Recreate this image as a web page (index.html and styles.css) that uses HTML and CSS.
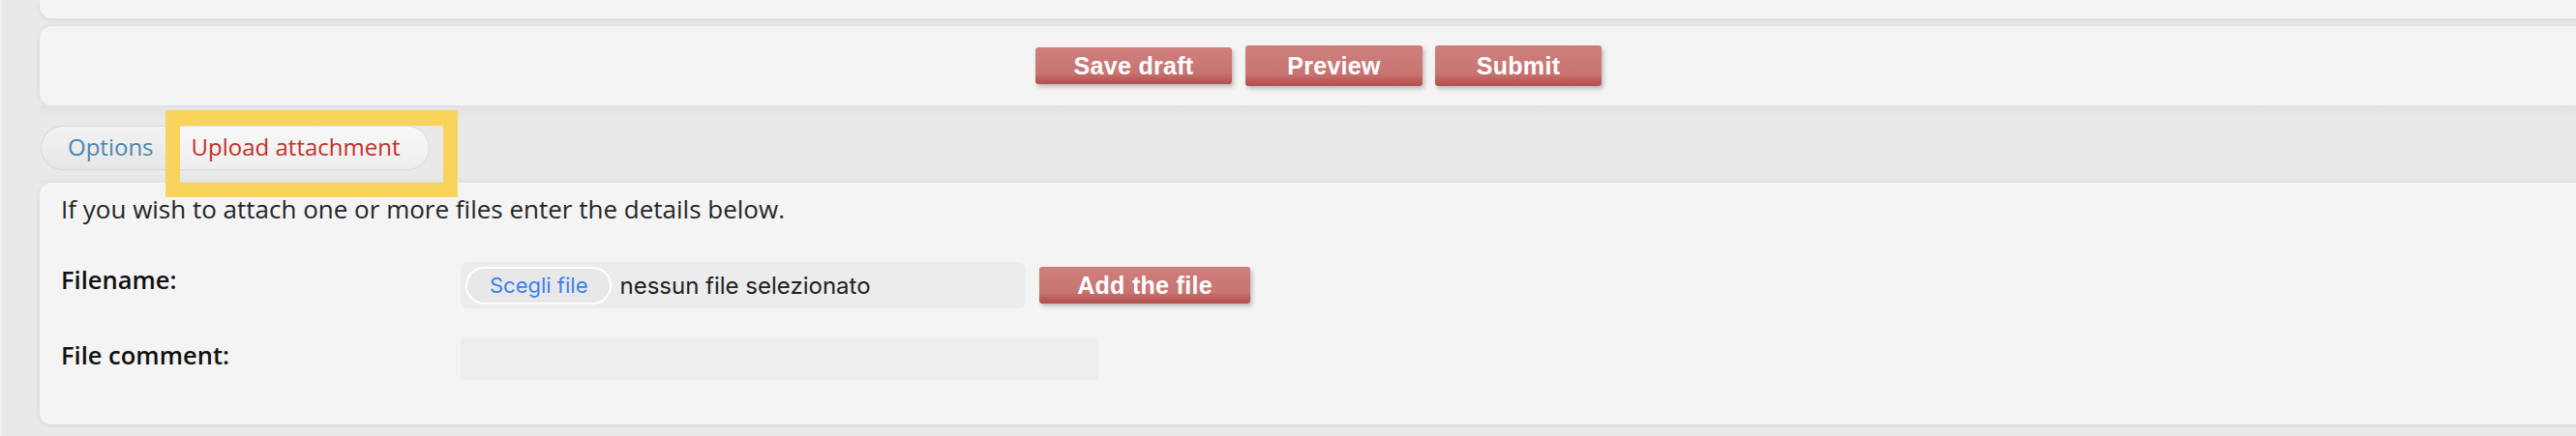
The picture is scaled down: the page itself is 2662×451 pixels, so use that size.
FILE: index.html
```html
<!DOCTYPE html>
<html lang="en">
<head>
<meta charset="utf-8">
<title>Upload attachment</title>
<link rel="stylesheet" href="styles.css">
</head>
<body>
<div class="page">
  <div class="card card-top"></div>
  <div class="card card-actions">
    <button class="btn btn-draft">Save draft</button>
    <button class="btn btn-preview">Preview</button>
    <button class="btn btn-submit">Submit</button>
  </div>
  <div class="tabbar">
    <div class="tabs">
      <a class="tab tab-options">Options</a>
      <a class="tab tab-upload">Upload attachment<span class="highlight"></span></a>
    </div>
  </div>
  <div class="card card-attach">
    <p class="intro">If you wish to attach one or more files enter the details below.</p>
    <div class="form">
      <label class="label">Filename:</label>
      <div class="field">
        <div class="file-input"><span class="file-btn">Scegli file</span><span class="file-name">nessun file selezionato</span></div>
        <button class="btn btn-add">Add the file</button>
      </div>
      <label class="label">File comment:</label>
      <div class="field"><div class="comment-input"></div></div>
    </div>
  </div>
</div>
</body>
</html>
```
FILE: styles.css
```css
html, body {
  margin: 0;
  padding: 0;
}
body {
  background: #e9e9e9;
  overflow: hidden;
  height: 451px;
  border-left: 2px solid #f1f1f1;
  font-family: "Open Sans", "Noto Sans", sans-serif;
}
.page {
  padding-left: 39px;
  margin-right: -22px;
}
.card {
  background: #f4f4f4;
  border-radius: 12px;
  box-shadow: 0 1px 6px rgba(0, 0, 0, 0.08);
}
.card-top {
  height: 19px;
  border-radius: 0 0 12px 12px;
}
.card-actions {
  margin-top: 8px;
  height: 82px;
  display: flex;
  align-items: center;
  justify-content: center;
  gap: 14px;
}
.btn {
  font-family: "Liberation Sans", Arial, sans-serif;
  font-weight: bold;
  font-size: 25px;
  letter-spacing: 0.3px;
  color: #fff;
  border: none;
  border-radius: 3px;
  padding: 0;
  background: linear-gradient(#cf7f7c 0%, #c77572 70%, #bd5f5c 85%, #b3504d 100%);
  box-shadow: 2px 3px 4px rgba(0, 0, 0, 0.22);
}
.btn-draft { width: 203px; height: 38px; }
.btn-preview { width: 183px; height: 42px; }
.btn-submit { width: 172px; height: 42px; margin-left: -1px; }
.btn-add { width: 218px; height: 38px; }

.tabbar {
  height: 80px;
  box-sizing: border-box;
  padding: 21px 0 0 1px;
  background: linear-gradient(#e1e1e1 0, #e6e6e6 8px, #e9e9e9 16px, #e9e9e9 70px, #e6e6e6 80px);
}
.tabs {
  display: inline-flex;
  height: 46px;
}
.tab {
  font-size: 24px;
  line-height: 33px;
  height: 46px;
  box-sizing: border-box;
  padding-top: 4px;
}
.tab-options {
  color: #4a86b3;
  padding-left: 27px;
  padding-right: 26px;
  border: 1px solid #d9d9d9;
  border-right: none;
  border-radius: 23px 0 0 23px;
  background: linear-gradient(#f2f2f2, #e6e6e6);
}
.tab-upload {
  position: relative;
  color: #c4302b;
  padding-left: 13px;
  padding-right: 30px;
  border: 1px solid #dcdcdc;
  border-left: none;
  border-radius: 0 23px 23px 0;
  background: linear-gradient(#f8f8f8, #eeeeee);
}
.highlight {
  position: absolute;
  left: -14px;
  top: -17px;
  width: 302px;
  height: 90px;
  box-sizing: border-box;
  border: 15px solid #f8d45a;
  border-top-width: 16px;
  z-index: 2;
}

.card-attach {
  padding: 10px 22px 46px 22px;
}
.intro {
  margin: 0;
  font-size: 26px;
  line-height: 35px;
  color: #262626;
}
.form {
  display: grid;
  grid-template-columns: 413px auto;
  row-gap: 30px;
  margin-top: 37px;
}
.label {
  font-size: 25.5px;
  font-weight: 600;
  line-height: 33px;
  padding-top: 2px;
  color: #111;
}
.field {
  display: flex;
  align-items: center;
  gap: 14px;
}
.file-input {
  width: 584px;
  height: 48px;
  box-sizing: border-box;
  padding: 0 5px;
  display: flex;
  align-items: center;
  gap: 8px;
  background: #ececec;
  border-radius: 8px;
  font-family: Inter, Roboto, sans-serif;
  font-size: 22px;
}
.file-btn {
  height: 39px;
  box-sizing: border-box;
  display: flex;
  align-items: center;
  padding: 0 23px;
  border: 2px solid #fff;
  border-radius: 20px;
  background: #e8e8e8;
  color: #3a7ff2;
}
.file-name {
  color: #222;
  font-size: 24px;
}
.comment-input {
  width: 659px;
  height: 44px;
  background: #eeeeee;
}
```
